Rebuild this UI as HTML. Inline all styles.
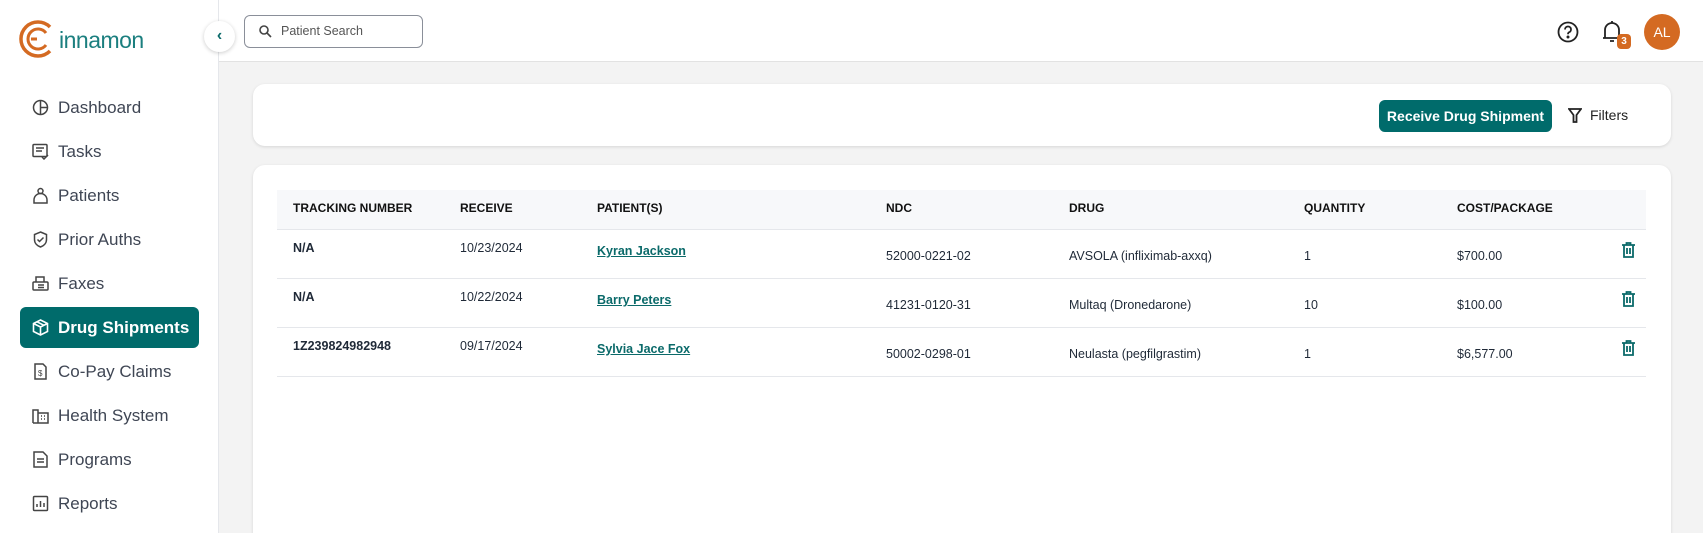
<!DOCTYPE html>
<html style="overflow:hidden;width:1703px;height:533px"><head><meta charset="utf-8"><style>
*{box-sizing:border-box;margin:0;padding:0}
body{width:1703px;height:533px;overflow:hidden;background:#f3f3f3;font-family:"Liberation Sans",sans-serif;color:#1f2937;position:relative}
.sb{position:absolute;left:0;top:0;width:219px;height:533px;background:#fff;border-right:1px solid #e5e7eb}
.top{position:absolute;left:219px;top:0;right:0;height:62px;background:#fff;border-bottom:1px solid #e2e2e2}
.nav{position:absolute;left:20px;width:179px;height:41px;border-radius:6px;display:flex;align-items:center;font-size:17px;color:#3f4654}
.nav svg{position:absolute;left:12px;top:12px}
.nav span{position:absolute;left:38px}
.nav.act{background:#006b6b;color:#fff;font-weight:bold}
.card{position:absolute;left:253px;width:1418px;background:#fff;border-radius:12px;box-shadow:0 1px 3px rgba(0,0,0,.12)}
.th{position:absolute;top:190px;left:277px;width:1369px;height:40px;background:#f7f8fa;border-bottom:1px solid #e5e7eb}
.c{position:absolute;font-size:12.5px;white-space:nowrap}
.h{font-weight:bold;font-size:12px;top:201px;color:#111}
.line{position:absolute;left:277px;width:1369px;height:1px;background:#e5e7eb}
a{color:#0b6a6a;font-weight:bold;text-decoration:underline}
</style></head><body>
<div class="sb">
<svg style="position:absolute;left:19px;top:19px" width="38" height="40" viewBox="0 0 38 40"><path d="M31 8A17 17 0 1 0 31 32" fill="none" stroke="#d46a22" stroke-width="3.5"/><path d="M27 14A10 10 0 1 0 27 26" fill="none" stroke="#d46a22" stroke-width="3"/><path d="M12 20h6" stroke="#d46a22" stroke-width="3"/></svg>
<div style="position:absolute;left:59px;top:27px;font-size:23px;color:#1b7f7f;letter-spacing:-0.5px">innamon</div>
<div class="nav" style="top:87px"><svg width="17" height="17" viewBox="0 0 17 17" fill="none" stroke="#444" stroke-width="1.5"><circle cx="8.5" cy="8.5" r="7"/><path d="M8.5 1.5v14M8.5 8.5h7"/></svg><span>Dashboard</span></div>
<div class="nav" style="top:131px"><svg width="17" height="17" viewBox="0 0 17 17" fill="none" stroke="#444" stroke-width="1.5"><rect x="1" y="1.5" width="14" height="12" rx="1"/><path d="M4 5h8M4 8h6M10 14l2 2 4-4"/></svg><span>Tasks</span></div>
<div class="nav" style="top:175px"><svg width="17" height="17" viewBox="0 0 17 17" fill="none" stroke="#444" stroke-width="1.5"><circle cx="8.5" cy="4" r="2.5"/><path d="M2 16v-3a6 6 0 0 1 13 0v3z"/></svg><span>Patients</span></div>
<div class="nav" style="top:219px"><svg width="17" height="17" viewBox="0 0 17 17" fill="none" stroke="#444" stroke-width="1.5"><path d="M8.5 1l6 2.5v5c0 4-3 6.5-6 7.5-3-1-6-3.5-6-7.5v-5z"/><path d="M5.5 8.5l2 2 4-4"/></svg><span>Prior Auths</span></div>
<div class="nav" style="top:263px"><svg width="17" height="17" viewBox="0 0 17 17" fill="none" stroke="#444" stroke-width="1.5"><rect x="1" y="7" width="15" height="8" rx="1"/><path d="M4 7V2h8v5M6 10h6M6 12.5h6"/></svg><span>Faxes</span></div>
<div class="nav act" style="top:307px"><svg width="17" height="17" viewBox="0 0 17 17" fill="none" stroke="#fff" stroke-width="1.6"><path d="M8.5 1l7 3.5v8l-7 3.5-7-3.5v-8z"/><path d="M1.5 4.5l7 3.5 7-3.5M8.5 8v8M5 2.8l7 3.5"/></svg><span>Drug Shipments</span></div>
<div class="nav" style="top:351px"><svg width="17" height="17" viewBox="0 0 17 17" fill="none" stroke="#444" stroke-width="1.5"><path d="M3 1h8l3 3v12H3z"/><text x="6" y="13" font-size="8" fill="#444" stroke="none">$</text></svg><span>Co-Pay Claims</span></div>
<div class="nav" style="top:395px"><svg width="17" height="17" viewBox="0 0 17 17" fill="none" stroke="#444" stroke-width="1.5"><path d="M1 16V3h5v13M6 6h10v10H1M9 9h1M12 9h1M9 12h1M12 12h1"/></svg><span>Health System</span></div>
<div class="nav" style="top:439px"><svg width="17" height="17" viewBox="0 0 17 17" fill="none" stroke="#444" stroke-width="1.5"><path d="M2 1h9l4 4v11H2z"/><path d="M5 8h7M5 11h7"/></svg><span>Programs</span></div>
<div class="nav" style="top:483px"><svg width="17" height="17" viewBox="0 0 17 17" fill="none" stroke="#444" stroke-width="1.5"><rect x="1.5" y="1.5" width="14" height="14" rx="1"/><path d="M5 12V9M8.5 12V6M12 12V8"/></svg><span>Reports</span></div>
</div>
<div class="top"></div>
<div style="position:absolute;left:204px;top:21px;width:31px;height:31px;border-radius:50%;background:#fff;box-shadow:0 1px 4px rgba(0,0,0,.2);text-align:center;line-height:29px;color:#0b6a6a;font-size:16px;font-weight:bold">‹</div>
<div style="position:absolute;left:244px;top:15px;width:179px;height:33px;border:1px solid #8a8f99;border-radius:6px;background:#fff">
<svg style="position:absolute;left:14px;top:9px" width="13" height="13" viewBox="0 0 13 13" fill="none" stroke="#444" stroke-width="1.6"><circle cx="5" cy="5" r="4"/><path d="M8 8l4 4"/></svg>
<span style="position:absolute;left:36px;top:8px;font-size:12.5px;color:#555">Patient Search</span></div>
<svg style="position:absolute;left:1557px;top:21px" width="22" height="22" viewBox="0 0 22 22" fill="none" stroke="#222" stroke-width="1.8"><circle cx="11" cy="11" r="9.5"/><path d="M8 8.5a3 3 0 1 1 4 2.8c-.8.4-1 1-1 2"/><circle cx="11" cy="16" r=".6" fill="#222"/></svg>
<svg style="position:absolute;left:1601px;top:19px" width="22" height="26" viewBox="0 0 22 26" fill="none" stroke="#222" stroke-width="1.8"><path d="M4 19V11a7 7 0 0 1 14 0v8h2H2zM11 2v2M9 22h4"/></svg>
<div style="position:absolute;left:1617px;top:34px;width:14px;height:15px;border-radius:4px;background:#d46a22;color:#fff;font-size:10px;font-weight:bold;text-align:center;line-height:15px">3</div>
<div style="position:absolute;left:1644px;top:14px;width:36px;height:36px;border-radius:50%;background:#d46a22;color:#fff;font-size:14px;text-align:center;line-height:36px">AL</div>
<div class="card" style="top:84px;height:62px"></div>
<div style="position:absolute;left:1379px;top:100px;width:173px;height:32px;border-radius:6px;background:#006b6b;color:#fff;font-weight:bold;font-size:14px;text-align:center;line-height:32px">Receive Drug Shipment</div>
<svg style="position:absolute;left:1568px;top:108px" width="14" height="15" viewBox="0 0 14 15" fill="none" stroke="#222" stroke-width="1.8"><path d="M1 1h12L8.5 7v7h-3V7z"/></svg>
<div style="position:absolute;left:1590px;top:107px;font-size:14px;color:#222">Filters</div>
<div class="card" style="top:165px;height:380px"></div>
<div class="th"></div>
<div class="c h" style="left:293px">TRACKING NUMBER</div>
<div class="c h" style="left:460px">RECEIVE</div>
<div class="c h" style="left:597px">PATIENT(S)</div>
<div class="c h" style="left:886px">NDC</div>
<div class="c h" style="left:1069px">DRUG</div>
<div class="c h" style="left:1304px">QUANTITY</div>
<div class="c h" style="left:1457px">COST/PACKAGE</div>
<div class="line" style="top:278px"></div><div class="line" style="top:327px"></div><div class="line" style="top:376px"></div>

<div class="c" style="left:293px;top:241px;font-weight:bold">N/A</div>
<div class="c" style="left:460px;top:241px">10/23/2024</div>
<div class="c" style="left:597px;top:244px"><a>Kyran Jackson</a></div>
<div class="c" style="left:886px;top:249px">52000-0221-02</div>
<div class="c" style="left:1069px;top:249px">AVSOLA (infliximab-axxq)</div>
<div class="c" style="left:1304px;top:249px">1</div>
<div class="c" style="left:1457px;top:249px">$700.00</div>

<div class="c" style="left:293px;top:290px;font-weight:bold">N/A</div>
<div class="c" style="left:460px;top:290px">10/22/2024</div>
<div class="c" style="left:597px;top:293px"><a>Barry Peters</a></div>
<div class="c" style="left:886px;top:298px">41231-0120-31</div>
<div class="c" style="left:1069px;top:298px">Multaq (Dronedarone)</div>
<div class="c" style="left:1304px;top:298px">10</div>
<div class="c" style="left:1457px;top:298px">$100.00</div>

<div class="c" style="left:293px;top:339px;font-weight:bold">1Z239824982948</div>
<div class="c" style="left:460px;top:339px">09/17/2024</div>
<div class="c" style="left:597px;top:342px"><a>Sylvia Jace Fox</a></div>
<div class="c" style="left:886px;top:347px">50002-0298-01</div>
<div class="c" style="left:1069px;top:347px">Neulasta (pegfilgrastim)</div>
<div class="c" style="left:1304px;top:347px">1</div>
<div class="c" style="left:1457px;top:347px">$6,577.00</div>

<svg style="position:absolute;left:1622px;top:242px" width="13" height="16" viewBox="0 0 13 16" fill="none" stroke="#0b6a6a" stroke-width="1.8"><path d="M0 3h13M4.5 3V1h4v2M2 3v12h9V3M5 6v6M8 6v6"/></svg>
<svg style="position:absolute;left:1622px;top:291px" width="13" height="16" viewBox="0 0 13 16" fill="none" stroke="#0b6a6a" stroke-width="1.8"><path d="M0 3h13M4.5 3V1h4v2M2 3v12h9V3M5 6v6M8 6v6"/></svg>
<svg style="position:absolute;left:1622px;top:340px" width="13" height="16" viewBox="0 0 13 16" fill="none" stroke="#0b6a6a" stroke-width="1.8"><path d="M0 3h13M4.5 3V1h4v2M2 3v12h9V3M5 6v6M8 6v6"/></svg>
</body></html>
